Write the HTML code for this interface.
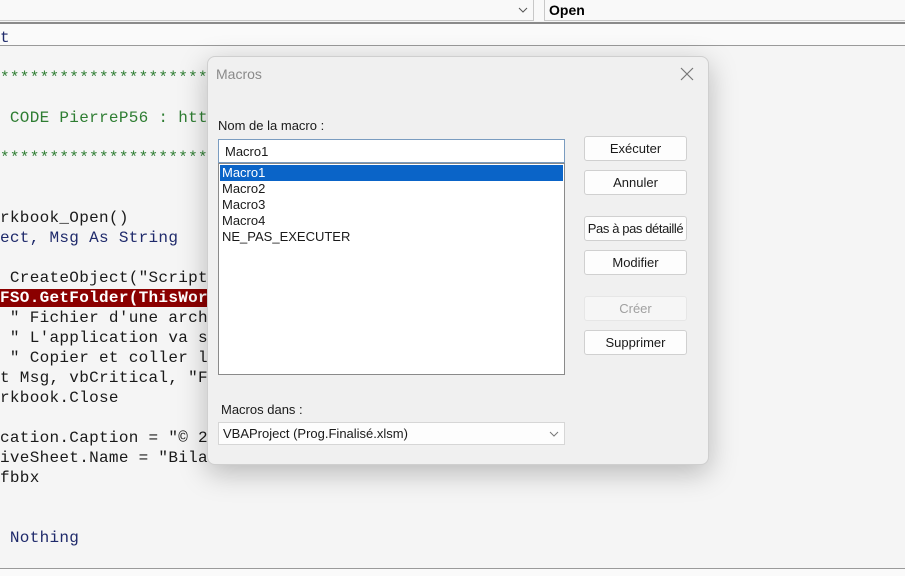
<!DOCTYPE html>
<html><head><meta charset="utf-8"><style>
*{margin:0;padding:0;box-sizing:border-box}
body{width:905px;height:576px;overflow:hidden;background:#f5f5f5;position:relative;font-family:"Liberation Sans",sans-serif}
.a{position:absolute}
.code{font-family:"Liberation Mono",monospace;font-size:16px;line-height:20px;white-space:pre;color:#1a1a1a;letter-spacing:.3px}
.g{color:#2e7d32}.b{color:#1f2a6b}
.ui{font-size:13px;color:#1a1a1a}
.btn{position:absolute;left:584px;width:103px;height:25px;background:#fdfdfd;border:1px solid #d0d0d0;border-radius:3px;font-size:13px;text-align:center;line-height:23px;color:#1a1a1a}
</style></head><body>
<div class="a" style="left:0;top:0;width:905px;height:21px;background:#f9f9f9"></div>
<div class="a" style="left:0;top:0;width:534px;height:21px;border-right:1px solid #c8c8c8;border-bottom:1px solid #c8c8c8"></div>
<svg class="a" style="left:517px;top:5px" width="12" height="10"><path d="M2 3 L6 7 L10 3" stroke="#555" fill="none" stroke-width="1"/></svg>
<div class="a" style="left:544px;top:0;width:361px;height:21px;border-left:1px solid #c8c8c8;border-bottom:1px solid #c8c8c8;font-weight:bold;font-size:14px;padding-left:4px;line-height:20px">Open</div>
<div class="a" style="left:0;top:22px;width:905px;height:2px;background:#8a8a8a"></div>
<div class="a" style="left:0;top:24px;width:905px;height:22px;background:#fafafa;border-bottom:1px solid #9a9a9a"></div>
<div class="a code b" style="left:0;top:27px;line-height:22px">t</div>
<div class="a code" style="left:0;top:68px"><span class="g">************************************************</span>

<span class="g"> CODE PierreP56 : https://</span>

<span class="g">************************************************</span>


rkbook_Open()
<span class="b">ect, Msg As String</span>

 CreateObject("Scripting.FileSystemObject")
<span style="background:#8b0000;color:#fff;font-weight:bold">FSO.GetFolder(ThisWorkbook</span>
 " Fichier d'une archive                       bCrLf &amp; _
 " L'application va se
 " Copier et coller le
t Msg, vbCritical, "FE
rkbook.Close

cation.Caption = "© 20
iveSheet.Name = "Bila
fbbx


<span class="b"> Nothing</span></div>
<div class="a" style="left:0;top:568px;width:905px;height:1px;background:#9a9a9a"></div>
<div class="a" style="left:0;top:569px;width:905px;height:7px;background:#fafafa"></div>

<div class="a" style="left:207px;top:56px;width:502px;height:409px;background:#f0f0f0;border:1px solid #cfcfcf;border-radius:8px;box-shadow:0 8px 28px rgba(0,0,0,.25)"></div>
<div class="a" style="left:216px;top:66px;font-size:14px;color:#8a8a8a">Macros</div>
<svg class="a" style="left:680px;top:67px" width="14" height="14"><path d="M1 1L13 13M13 1L1 13" stroke="#777" stroke-width="1.2"/></svg>
<div class="a ui" style="left:218px;top:118px">Nom de la macro :</div>
<div class="a ui" style="left:218px;top:139px;width:347px;height:24px;background:#fff;border:1px solid #7a9cc0;padding:4px 0 0 6px">Macro1</div>
<div class="a" style="left:218px;top:163px;width:347px;height:212px;background:#fff;border:1px solid #8a8a8a"></div>
<div class="a" style="left:220px;top:165px;width:343px;height:16px;background:#0a64c8"></div>
<div class="a ui" style="left:222px;top:165px;line-height:16px">
<div style="color:#fff">Macro1</div><div>Macro2</div><div>Macro3</div><div>Macro4</div><div>NE_PAS_EXECUTER</div></div>
<div class="btn" style="top:136px">Exécuter</div>
<div class="btn" style="top:170px">Annuler</div>
<div class="btn" style="top:216px;white-space:nowrap;letter-spacing:-.4px">Pas à pas détaillé</div>
<div class="btn" style="top:250px">Modifier</div>
<div class="btn" style="top:296px;color:#a0a0a0;background:#f6f6f6;border-color:#e6e6e6">Créer</div>
<div class="btn" style="top:330px">Supprimer</div>
<div class="a ui" style="left:221px;top:402px">Macros dans :</div>
<div class="a ui" style="left:218px;top:422px;width:347px;height:23px;background:#fdfdfd;border:1px solid #d6d6d6;padding:3px 0 0 4px">VBAProject (Prog.Finalisé.xlsm)</div>
<svg class="a" style="left:548px;top:429px" width="12" height="10"><path d="M2 3 L6 7 L10 3" stroke="#777" fill="none"/></svg>
</body></html>
